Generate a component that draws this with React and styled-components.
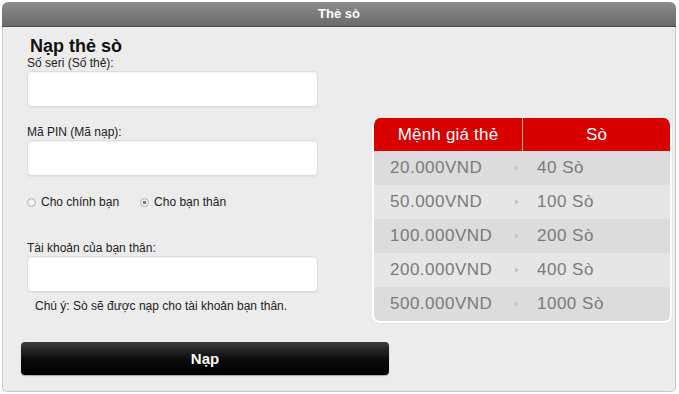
import React from 'react';
import styled, { createGlobalStyle } from 'styled-components';

const GlobalStyle = createGlobalStyle`
  body {
    margin: 0;
    background: #ffffff;
    font-family: 'Liberation Sans', Arial, sans-serif;
  }
`;

const Panel = styled.div`
  margin: 2px 3px 0 2px;
  width: 674px;
`;

const Header = styled.div`
  height: 24px;
  border-radius: 6px 6px 0 0;
  background: linear-gradient(#8c8c8c, #6a6a6a);
  border-bottom: 1px solid #4a4a4a;
  color: #ffffff;
  font-weight: bold;
  font-size: 13px;
  line-height: 24px;
  text-align: center;
`;

const Body = styled.div`
  background: #ececec;
  border: 1px solid #c8c8c8;
  border-top: none;
  border-radius: 0 0 5px 5px;
  padding: 9px 0 16px 0;
`;

const Main = styled.div`
  display: flex;
  align-items: flex-start;
`;

const Form = styled.div`
  display: flex;
  flex-direction: column;
  width: 291px;
  margin-left: 24px;
`;

const Title = styled.div`
  font-size: 18px;
  font-weight: bold;
  color: #111;
  line-height: 20px;
  margin-left: 3px;
`;

const Label = styled.div`
  font-size: 12px;
  line-height: 13px;
  color: #222;
  margin-top: ${(p) => p.$top || 0}px;
  margin-bottom: 1px;
`;

const Input = styled.input`
  height: 36px;
  box-sizing: border-box;
  width: 291px;
  border: 1px solid #dcdcdc;
  border-radius: 4px;
  background: #ffffff;
  box-shadow: inset 0 1px 2px rgba(0, 0, 0, 0.06), 0 1px 1px rgba(0, 0, 0, 0.05);
  outline: none;
`;

const RadioRow = styled.div`
  display: flex;
  align-items: center;
  gap: 21px;
  margin-top: 19px;
  font-size: 12px;
  color: #222;
`;

const RadioOption = styled.label`
  display: flex;
  align-items: center;
  gap: 5px;
`;

const RadioDot = styled.span`
  width: 7px;
  height: 7px;
  border-radius: 50%;
  border: 1px solid #b4b4b4;
  background: radial-gradient(circle, ${(p) => (p.$on ? '#777 0, #777 1.6px,' : '')} #f4f4f4 2px, #e0e0e0 100%);
`;

const Note = styled.div`
  font-size: 12px;
  color: #222;
  margin: 7px 0 0 8px;
  line-height: 14px;
`;

const Table = styled.div`
  margin-left: 54px;
  margin-top: 82px;
  width: 296px;
  border-radius: 8px;
  border: 2px solid #ffffff;
  border-top: none;
  overflow: hidden;
  box-shadow: 0 1px 1px rgba(0, 0, 0, 0.04);
`;

const HeadRow = styled.div`
  display: grid;
  grid-template-columns: 148px 1fr;
  height: 33px;
  background: #d90000;
  color: #ffffff;
  font-size: 17px;
  letter-spacing: 0.2px;
  line-height: 33px;
  text-align: center;
`;

const HeadCell = styled.div`
  & + & {
    border-left: 1px solid #f0a0a0;
  }
`;

const Row = styled.div`
  display: grid;
  grid-template-columns: 144px 1fr;
  height: 34px;
  line-height: 34px;
  background: ${(p) => (p.$alt ? '#e6e6e6' : '#dcdcdc')};
  color: #7a7a7a;
  font-size: 17px;
  letter-spacing: 0.5px;
`;

const Price = styled.div`
  padding-left: 16px;
  position: relative;
  &::after {
    content: '';
    position: absolute;
    right: -1px;
    top: 14px;
    border-left: 4px solid #c4c4c4;
    border-top: 3px solid transparent;
    border-bottom: 3px solid transparent;
  }
`;

const Amount = styled.div`
  padding-left: 19px;
`;

const ButtonRow = styled.div`
  margin: 19px 0 0 18px;
`;

const Button = styled.button`
  display: block;
  width: 368px;
  height: 33px;
  border: none;
  border-radius: 4px;
  background: linear-gradient(#3c3c3c, #0a0a0a 55%, #000);
  box-shadow: 0 1px 1px rgba(0, 0, 0, 0.3);
  color: #ffffff;
  font-family: 'Liberation Sans', Arial, sans-serif;
  font-weight: bold;
  font-size: 15px;
  cursor: pointer;
`;

const rates = [
  ['20.000VND', '40 Sò'],
  ['50.000VND', '100 Sò'],
  ['100.000VND', '200 Sò'],
  ['200.000VND', '400 Sò'],
  ['500.000VND', '1000 Sò'],
];

export default function App() {
  return (
    <>
      <GlobalStyle />
      <Panel>
        <Header>Thẻ sò</Header>
        <Body>
          <Main>
            <Form>
              <Title>Nạp thẻ sò</Title>
              <Label $top={1}>Số seri (Số thẻ):</Label>
              <Input />
              <Label $top={19}>Mã PIN (Mã nạp):</Label>
              <Input />
              <RadioRow>
                <RadioOption>
                  <RadioDot />
                  Cho chính bạn
                </RadioOption>
                <RadioOption>
                  <RadioDot $on />
                  Cho bạn thân
                </RadioOption>
              </RadioRow>
              <Label $top={33}>Tài khoản của bạn thân:</Label>
              <Input />
              <Note>Chú ý: Sò sẽ được nạp cho tài khoản bạn thân.</Note>
            </Form>
            <Table>
              <HeadRow>
                <HeadCell>Mệnh giá thẻ</HeadCell>
                <HeadCell>Sò</HeadCell>
              </HeadRow>
              {rates.map(([price, amount], i) => (
                <Row key={price} $alt={i % 2 === 1}>
                  <Price>{price}</Price>
                  <Amount>{amount}</Amount>
                </Row>
              ))}
            </Table>
          </Main>
          <ButtonRow>
            <Button>Nạp</Button>
          </ButtonRow>
        </Body>
      </Panel>
    </>
  );
}
